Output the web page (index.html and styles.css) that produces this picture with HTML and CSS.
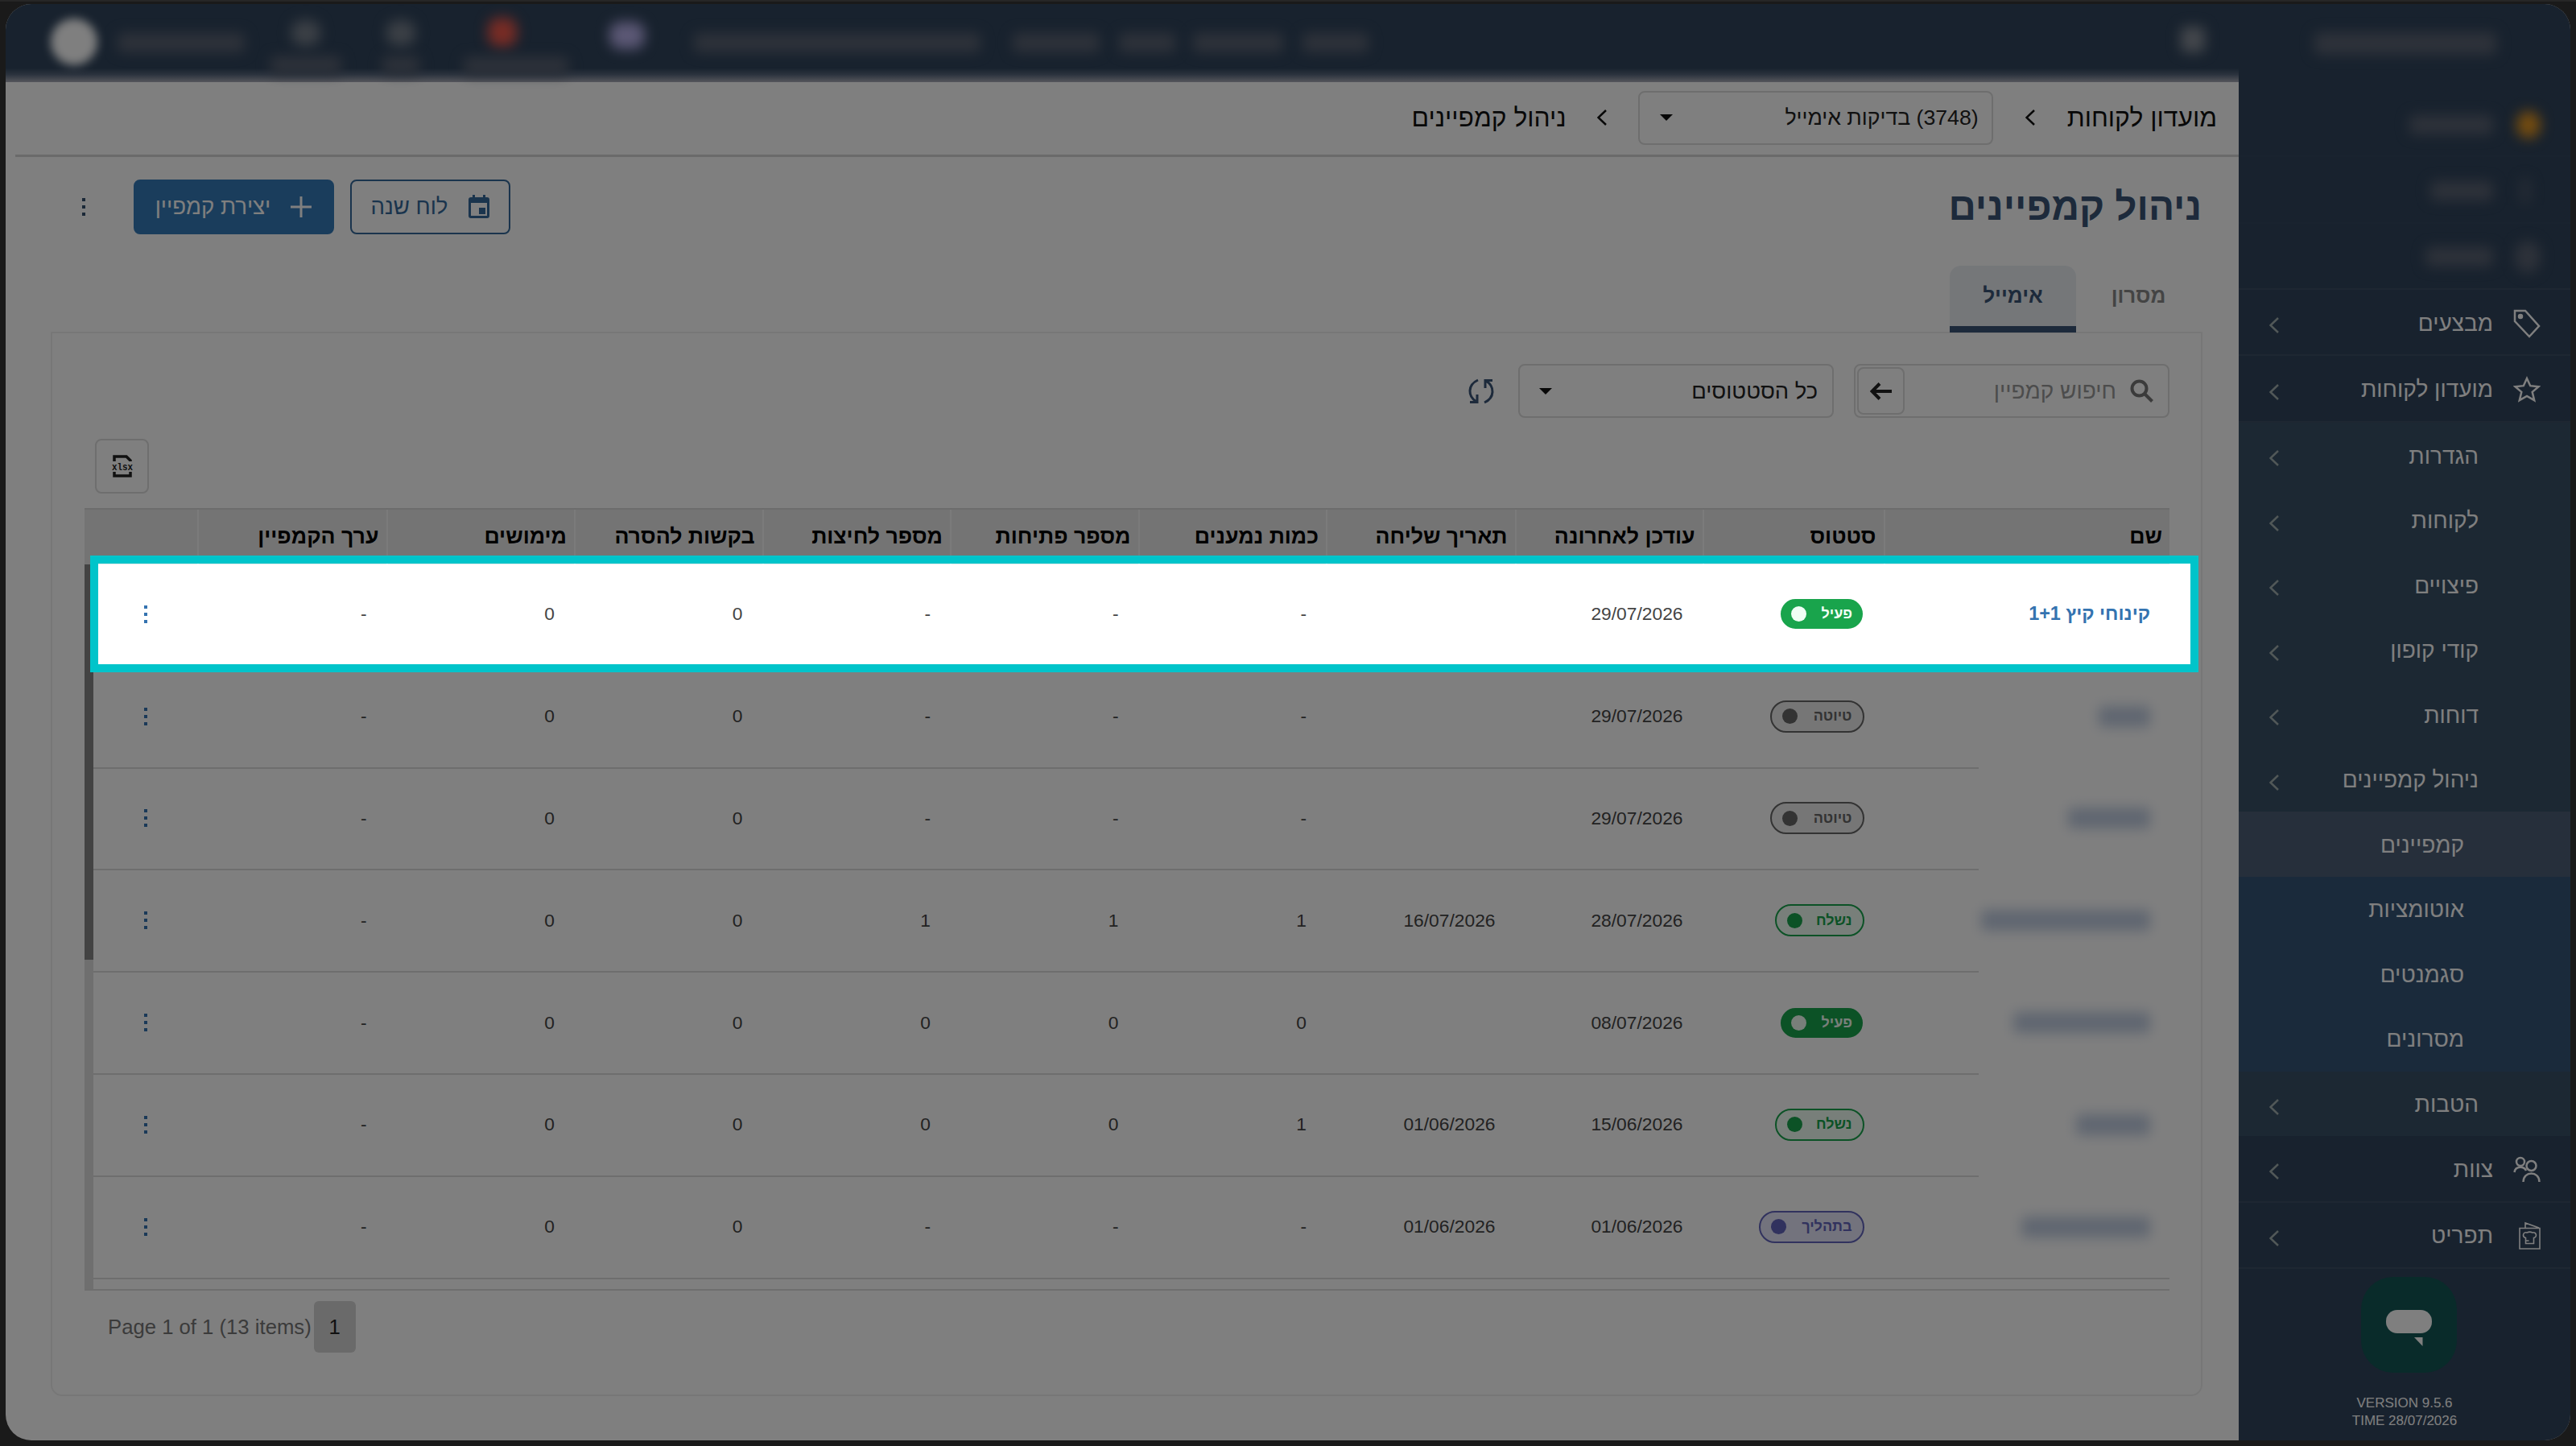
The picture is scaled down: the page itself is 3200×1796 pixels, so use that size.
FILE: index.html
```
<!DOCTYPE html>
<html lang="he" dir="rtl">
<head>
  <meta charset="UTF-8" />
  <meta name="viewport" content="width=device-width, initial-scale=1.0"/>
  <link rel="stylesheet" href="styles.css">
  <title>ניהול קמפיינים</title>
</head>
<body>
  <div class="window">

    <!-- Sidebar -->
    <aside class="sidebar">
      <div class="brand"><span class="smudge w-brand"></span></div>
      <div class="nav-item"><span class="nav-icon"><i class="smudge bell"></i></span><span class="smudge w-90"></span></div>
      <div class="nav-item"><span class="nav-icon"><i class="smudge thin"></i></span><span class="smudge w-75"></span></div>
      <div class="nav-item"><span class="nav-icon"><i class="smudge round"></i></span><span class="smudge w-80"></span></div>
      <div class="nav-item">
        <span class="nav-icon"><svg width="34" height="36" viewBox="0 0 34 36"><path d="M2 2h13l17 19-12 13L2 15z"/><circle class="fill" cx="9" cy="9" r="2"/></svg></span>
        <span class="label">מבצעים</span><svg class="chev" viewBox="0 0 12 20"><path d="M11 1 1.500 10 11 19"/></svg>
      </div>
      <div class="nav-item">
        <span class="nav-icon"><svg width="34" height="34" viewBox="0 0 34 34"><path d="M17 3l4.200 9.200 10.300 1-7.800 6.700 2.500 10.300L17 25l-9.200 5.200 2.500-10.300L2.500 13.200l10.300-1z"/></svg></span>
        <span class="label">מועדון לקוחות</span><svg class="chev" viewBox="0 0 12 20"><path d="M11 1 1.500 10 11 19"/></svg>
      </div>

      <div class="nav-sub"><span class="label">הגדרות</span><svg class="chev" viewBox="0 0 12 20"><path d="M11 1 1.500 10 11 19"/></svg></div>
      <div class="nav-sub"><span class="label">לקוחות</span><svg class="chev" viewBox="0 0 12 20"><path d="M11 1 1.500 10 11 19"/></svg></div>
      <div class="nav-sub"><span class="label">פיצויים</span><svg class="chev" viewBox="0 0 12 20"><path d="M11 1 1.500 10 11 19"/></svg></div>
      <div class="nav-sub"><span class="label">קודי קופון</span><svg class="chev" viewBox="0 0 12 20"><path d="M11 1 1.500 10 11 19"/></svg></div>
      <div class="nav-sub"><span class="label">דוחות</span><svg class="chev" viewBox="0 0 12 20"><path d="M11 1 1.500 10 11 19"/></svg></div>
      <div class="nav-sub"><span class="label">ניהול קמפיינים</span><svg class="chev" viewBox="0 0 12 20"><path d="M11 1 1.500 10 11 19"/></svg></div>
      <div class="nav-sub deep selected"><span class="label">קמפיינים</span></div>
      <div class="nav-sub deep"><span class="label">אוטומציות</span></div>
      <div class="nav-sub deep"><span class="label">סגמנטים</span></div>
      <div class="nav-sub deep"><span class="label">מסרונים</span></div>
      <div class="nav-sub"><span class="label">הטבות</span><svg class="chev" viewBox="0 0 12 20"><path d="M11 1 1.500 10 11 19"/></svg></div>

      <div class="nav-item">
        <span class="nav-icon"><svg width="34" height="34" viewBox="0 0 34 34"><circle cx="9" cy="7" r="5"/><circle cx="22.500" cy="12" r="6"/><path d="M1.500 20c1-8 12-8 14.500-2M12.500 32c0-14 20-14 20 0"/></svg></span>
        <span class="label">צוות</span><svg class="chev" viewBox="0 0 12 20"><path d="M11 1 1.500 10 11 19"/></svg>
      </div>
      <div class="nav-item">
        <span class="nav-icon"><svg class="light" width="27" height="36" viewBox="0 0 27 36"><path d="M1 8.500h25V34H1zM8 8V2l17 6M8.500 27.500h10v-7c5-1 3-8-1.500-6.500-2-1-5-1-7 0-4.500-1.500-6.500 5-1.500 6.500zM8.500 24h4"/></svg></span>
        <span class="label">תפריט</span><svg class="chev" viewBox="0 0 12 20"><path d="M11 1 1.500 10 11 19"/></svg>
      </div>

      <div class="sidebar-footer">
        <div class="chat">
          <svg width="60" height="50" viewBox="0 0 60 50"><rect x="1" y="1" width="57" height="29" rx="14"/><path d="M36 35h10.500v11z"/></svg>
        </div>
        <div class="version">VERSION 9.5.6<br>TIME 28/07/2026</div>
      </div>
    </aside>

    <main class="main">
      <header class="topbar" dir="ltr">
        <i class="smudge avatar"></i>
        <i class="smudge user"></i>
        <div class="top-icon t1"><i class="smudge dot"></i><i class="smudge cap"></i></div>
        <div class="top-icon t2"><i class="smudge dot"></i><i class="smudge cap"></i></div>
        <div class="top-icon t3"><i class="smudge dot red"></i><i class="smudge cap"></i></div>
        <i class="smudge flag"></i>
        <i class="smudge site"></i>
        <i class="smudge word w1"></i><i class="smudge word w2"></i><i class="smudge word w3"></i><i class="smudge word w4"></i>
        <i class="smudge burger"></i>
      </header>

      <nav class="breadcrumb">
        <span class="crumb">מועדון לקוחות</span>
        <svg class="crumb-chev" viewBox="0 0 12 20"><path d="M11 1 1.500 10 11 19"/></svg>
        <div class="select brand-select"><span>(3748) בדיקות אימייל</span><i class="caret"></i></div>
        <svg class="crumb-chev second" viewBox="0 0 12 20"><path d="M11 1 1.500 10 11 19"/></svg>
        <span class="crumb">ניהול קמפיינים</span>
      </nav>

      <div class="title-row">
        <h1>ניהול קמפיינים</h1>
        <div class="actions">
          <button class="btn btn-outline">
            <svg width="28" height="30" viewBox="0 0 28 30"><path d="M6 0h3v3h10V0h3v3h2a3 3 0 0 1 3 3v20a3 3 0 0 1-3 3H4a3 3 0 0 1-3-3V6a3 3 0 0 1 3-3h2zM4 10v16h20V10z"/><path d="M14 16h8v8h-8z"/></svg>
            <span>לוח שנה</span>
          </button>
          <button class="btn btn-primary">
            <svg width="28" height="28" viewBox="0 0 28 28"><path d="M12.500 1h3v11.500H27v3H15.500V27h-3V15.500H1v-3h11.500z"/></svg>
            <span>יצירת קמפיין</span>
          </button>
          <i class="dots dark"></i>
        </div>
      </div>

      <div class="tabs">
        <div class="tab">מסרון</div>
        <div class="tab active">אימייל</div>
      </div>

      <section class="panel">
        <div class="filters">
          <div class="search">
            <svg width="30" height="30" viewBox="0 0 30 30"><circle cx="11.500" cy="11.500" r="9"/><path d="M18 18l9.500 9.500"/></svg>
            <span>חיפוש קמפיין</span>
            <b class="go"><svg width="28" height="24" viewBox="0 0 28 24"><path d="M27 12H3M12 2.500 2.500 12l9.500 9.500"/></svg></b>
          </div>
          <div class="select status-select"><span>כל הסטטוסים</span><i class="caret"></i></div>
          <svg class="refresh" width="32" height="32" viewBox="0 0 32 32"><path d="M12 2C-1 8-1 22 10 29M2 29.500h9V20M20 30c13-6 13-20 2-27M30 2.500h-9V12"/></svg>
        </div>

        <div class="export-row">
          <div class="export">
            <svg width="28" height="28" viewBox="0 0 28 28"><path d="M4 8V2h15l5 5v1M4 21v5h20v-5"/><text x="14" y="19" textLength="26" lengthAdjust="spacingAndGlyphs">xlsx</text></svg>
          </div>
        </div>

        <div class="grid">
          <div class="row head">
            <div>שם</div><div>סטטוס</div><div>עודכן לאחרונה</div><div>תאריך שליחה</div><div>כמות נמענים</div><div>מספר פתיחות</div><div>מספר לחיצות</div><div>בקשות להסרה</div><div>מימושים</div><div>ערך הקמפיין</div><div></div>
          </div>
          <div class="grid-body">
            <div class="rows">
              <div class="row">
                <div class="name">קינוחי קיץ 1+1</div><div><span class="badge active">פעיל</span></div><div>29/07/2026</div><div></div><div>-</div><div>-</div><div>-</div><div>0</div><div>0</div><div>-</div><div><i class="dots"></i></div>
              </div>
              <div class="row">
                <div class="name"><i class="smudge n1"></i></div><div><span class="badge draft">טיוטה</span></div><div>29/07/2026</div><div></div><div>-</div><div>-</div><div>-</div><div>0</div><div>0</div><div>-</div><div><i class="dots"></i></div>
              </div>
              <div class="row">
                <div class="name"><i class="smudge n2"></i></div><div><span class="badge draft">טיוטה</span></div><div>29/07/2026</div><div></div><div>-</div><div>-</div><div>-</div><div>0</div><div>0</div><div>-</div><div><i class="dots"></i></div>
              </div>
              <div class="row">
                <div class="name"><i class="smudge n3"></i></div><div><span class="badge sent">נשלח</span></div><div>28/07/2026</div><div>16/07/2026</div><div>1</div><div>1</div><div>1</div><div>0</div><div>0</div><div>-</div><div><i class="dots"></i></div>
              </div>
              <div class="row">
                <div class="name"><i class="smudge n4"></i></div><div><span class="badge active">פעיל</span></div><div>08/07/2026</div><div></div><div>0</div><div>0</div><div>0</div><div>0</div><div>0</div><div>-</div><div><i class="dots"></i></div>
              </div>
              <div class="row">
                <div class="name"><i class="smudge n5"></i></div><div><span class="badge sent">נשלח</span></div><div>15/06/2026</div><div>01/06/2026</div><div>1</div><div>0</div><div>0</div><div>0</div><div>0</div><div>-</div><div><i class="dots"></i></div>
              </div>
              <div class="row last">
                <div class="name"><i class="smudge n6"></i></div><div><span class="badge progress">בתהליך</span></div><div>01/06/2026</div><div>01/06/2026</div><div>-</div><div>-</div><div>-</div><div>0</div><div>0</div><div>-</div><div><i class="dots"></i></div>
              </div>
            </div>
            <div class="scrollbar"><div class="thumb"></div></div>
          </div>
        </div>

        <div class="pager" dir="ltr">
          <span>Page 1 of 1 (13 items)</span><b>1</b>
        </div>
      </section>
    </main>
  </div>

  <!-- Dims everything except the first campaign -->
  <div class="spotlight"></div>
</body>
</html>
```
FILE: styles.css
```
* {
  box-sizing: border-box;
}

:root {
  --navy: #30445c;
  --blue: #3473b0;
  --line: #dcdcdc;
  --accent: #00c4ca;
}

html, body {
  margin: 0;
  padding: 0;
  height: 100%;
  overflow: hidden;
}

body {
  background: #343434;
  border-top: 2px solid #4c4c4c;
  padding: 3px 7px 0;
  font-family: 'Liberation Sans', Arial, sans-serif;
  color: #444;
}

.window {
  display: flex;
  width: 3186px;
  height: 1784px;
  border-radius: 32px;
  overflow: hidden;
  background: #fff;
}

svg {
  display: block;
  flex: none;
  fill: none;
  stroke: currentColor;
}

/* blurred private details */
.smudge {
  display: block;
  flex: none;
  height: 24px;
  border-radius: 6px;
  background: #5c6474;
  filter: blur(8px);
}

/* ---------- sidebar ---------- */
.sidebar {
  width: 412px;
  flex: none;
  background: var(--navy);
  color: #fff;
  display: flex;
  flex-direction: column;
}

.brand {
  height: 108px;
  padding: 35px 92px 0 0;
}

.w-brand { width: 226px; height: 28px; }
.w-90 { width: 104px; }
.w-75 { width: 78px; }
.w-80 { width: 84px; }

.nav-item {
  height: 82.350px;
  flex: none;
  border-bottom: 2px solid #3c4f64;
  display: flex;
  align-items: center;
  padding: 3px 37px 0 0;
  font-size: 28px;
}

.nav-item:nth-child(2),
.nav-item:nth-child(3) {
  border-bottom-color: #32465e;
}

.nav-icon {
  width: 59px;
  flex: none;
}

.nav-icon svg {
  stroke-width: 2.500;
}

.nav-icon svg.light {
  stroke-width: 1.600;
}

.nav-icon .fill {
  fill: #fff;
}

.bell { width: 30px; height: 34px; border-radius: 50%; background: #e9981f; }
.thin { width: 14px; height: 34px; margin-right: 12px; opacity: .6; }
.round { width: 32px; height: 40px; border-radius: 50%; }

.chev {
  width: 12px;
  height: 20px;
  margin: 5px auto 0 38px;
  stroke: #a3b0b0;
  stroke-width: 2.500;
}

.nav-sub {
  height: 80.600px;
  flex: none;
  background: #385066;
  display: flex;
  align-items: center;
  padding: 3px 114px 0 0;
  font-size: 28px;
}

.nav-sub.deep {
  background: #345476;
  padding-top: 2px;
  padding-right: 132px;
}

.nav-sub.deep.selected {
  background: #4c5e76;
}

.sidebar-footer {
  padding-top: 10px;
}

.chat {
  width: 119px;
  height: 119px;
  margin-right: 141px;
  border-radius: 40px;
  background: #125654;
  display: flex;
  align-items: center;
  justify-content: center;
  padding-top: 11px;
}

.chat svg {
  fill: #fff;
  stroke: none;
}

.version {
  direction: ltr;
  text-align: center;
  margin-top: 27px;
  font-size: 17px;
  line-height: 22.500px;
}

/* ---------- top bar ---------- */
.main {
  flex: 1;
  min-width: 0;
}

.topbar {
  height: 97px;
  display: flex;
  background: linear-gradient(var(--navy) 82%, #55647a 90%, #aaacb8);
}

.topbar .smudge { margin-top: 36px; }
.topbar .avatar { width: 58px; height: 58px; margin: 18px 0 0 56px; border-radius: 50%; background: #fff; filter: blur(6px); }
.topbar .user { width: 158px; margin-left: 25px; }
.topbar .site { width: 356px; margin-left: 61px; }
.topbar .w1 { width: 108px; margin-left: 40px; }
.topbar .w2 { width: 70px; margin-left: 24px; }
.topbar .w3 { width: 112px; margin-left: 22px; }
.topbar .w4 { width: 82px; margin-left: 24px; }
.topbar .burger { width: 30px; height: 32px; margin: 28px 0 0 1009px; background: #888e98; }
.topbar .flag { width: 44px; height: 34px; margin: 22px 0 0 51px; border-radius: 14px; background: #b7b0ea; }

.top-icon {
  display: flex;
  flex-direction: column;
  align-items: center;
}

.topbar .top-icon .smudge { margin-top: 20px; }
.topbar .top-icon .cap { margin-top: 13px; height: 22px; width: 100%; }
.topbar .top-icon .dot { width: 36px; height: 32px; border-radius: 14px; background: #77808c; }
.topbar .top-icon .dot.red { background: #f0584a; margin: 17px 34px 0 0; height: 36px; }
.t1 { width: 88px; margin-left: 32px; }
.t2 { width: 46px; margin-left: 51px; }
.t3 { width: 130px; margin-left: 55px; }

/* ---------- breadcrumb ---------- */
.breadcrumb {
  height: 93px;
  margin-left: 12px;
  padding: 0 27px 2px 0;
  display: flex;
  align-items: center;
  border-bottom: 3px solid #d4d4d4;
  color: #111;
  font-size: 31.800px;
}

.crumb-chev {
  width: 12px;
  height: 20px;
  margin: 0 40px;
  stroke-width: 2.500;
}

.crumb-chev.second {
  margin: 0 39px 0 38px;
}

.select {
  height: 67px;
  border: 2px solid var(--line);
  border-radius: 8px;
  display: flex;
  align-items: center;
  justify-content: space-between;
  color: #222;
  font-size: 27.300px;
}

.brand-select {
  width: 441px;
  padding: 0 16px 0 25px;
  font-size: 26.700px;
}

.caret {
  border: 8px solid transparent;
  border-top-color: #111;
  border-bottom: 0;
}

/* ---------- title ---------- */
.title-row {
  height: 135px;
  padding: 28px 46px 0 95px;
  display: flex;
  justify-content: space-between;
}

h1 {
  margin: 8px 0 0;
  font-size: 47.600px;
  line-height: 52px;
  color: #3a5576;
}

.actions {
  display: flex;
  align-items: flex-start;
}

.btn {
  height: 68px;
  border-radius: 8px;
  border: 2px solid #34699a;
  padding: 0;
  display: flex;
  align-items: center;
  justify-content: center;
  gap: 24px;
  font-family: inherit;
  font-size: 27.600px;
  color: #34699a;
}

.btn svg {
  fill: currentColor;
  fill-rule: evenodd;
  stroke: none;
}

.btn-outline {
  width: 199px;
  background: none;
}

.btn-primary {
  width: 249px;
  margin-right: 20px;
  background: #347ab8;
  border-color: #347ab8;
  color: #fff;
}

.dots {
  display: block;
  width: 4px;
  height: 4px;
  background: var(--blue);
  box-shadow: 0 -9px var(--blue), 0 9px var(--blue);
}

.dots.dark {
  margin: 32px 60px 0 0;
  background: #34506e;
  box-shadow: 0 -9px #34506e, 0 9px #34506e;
}

/* ---------- tabs ---------- */
.tabs {
  display: flex;
  padding-right: 47px;
  height: 82px;
}

.tab {
  height: 83px;
  width: 155px;
  padding-top: 22px;
  text-align: center;
  font-weight: bold;
  font-size: 26px;
  line-height: 30px;
  color: #888;
}

.tab.active {
  position: relative;
  width: 157px;
  background: #ebeef3;
  border-bottom: 8px solid #3a5576;
  border-radius: 14px 14px 0 0;
  color: #3a5576;
}

/* ---------- panel ---------- */
.panel {
  margin: 0 45px 0 56px;
  height: 1322px;
  border: 2px solid #eee;
  border-radius: 0 0 14px 14px;
  padding: 38px 39px 0 40px;
}

.filters {
  height: 67px;
  display: flex;
  align-items: center;
}

.search {
  width: 392px;
  height: 67px;
  border: 2px solid var(--line);
  border-radius: 8px;
  display: flex;
  align-items: center;
  padding: 0 17px 0 2px;
  font-size: 28px;
  color: #999;
}

.search > svg {
  stroke: #777;
  stroke-width: 4;
  margin-left: 17px;
}

.go {
  width: 59px;
  height: 59px;
  margin-right: auto;
  border: 2px solid var(--line);
  border-radius: 8px;
  display: flex;
  align-items: center;
  justify-content: center;
  color: #222;
}

.go svg {
  stroke-width: 4;
}

.status-select {
  width: 392px;
  margin-right: 25px;
  padding: 0 18px 0 24px;
}

.refresh {
  margin-right: 30px;
  stroke: #3a5576;
  stroke-width: 3;
}

.export-row {
  height: 112px;
  padding-top: 26px;
  display: flex;
  justify-content: flex-end;
}

.export {
  width: 67px;
  height: 68px;
  margin-left: 13px;
  border: 2px solid var(--line);
  border-radius: 8px;
  display: flex;
  align-items: center;
  justify-content: center;
  color: #222;
}

.export svg {
  overflow: visible;
  stroke-width: 3.500;
}

.export text {
  font: bold 13px 'Liberation Mono', monospace;
  text-anchor: middle;
  direction: ltr;
  fill: #222;
  stroke: none;
}

/* ---------- table ---------- */
.row {
  display: grid;
  grid-template-columns: 355.500px 225px 233px 234.500px repeat(5, 233.500px) 234.500px 1fr;
  align-items: center;
  height: 126.800px;
  padding-bottom: 3px;
  font-size: 22.800px;
  background: linear-gradient(to left, transparent 237px, var(--line) 237px) bottom / 100% 2px no-repeat;
}

.row > div {
  padding-right: 24px;
}

.row.last {
  background: linear-gradient(var(--line), var(--line)) bottom / 100% 2px no-repeat;
}

.row > div:last-child {
  padding: 0;
  display: flex;
  justify-content: center;
}

.row.head {
  height: 70px;
  padding: 0;
  align-items: stretch;
  background: #e9e9e9;
  border-top: 2px solid #d8d8d8;
  color: #000;
  font-weight: bold;
  font-size: 26.700px;
}

.row.head > div {
  padding: 18px 9px 0 0;
  line-height: 30px;
  border-left: 2px solid #f6f6f6;
}

.row.head > div:last-child {
  border-left: 0;
}

.row .name {
  font-weight: bold;
  font-size: 23.400px;
  color: var(--blue);
}

.name .smudge {
  background: #bfcce1;
  height: 26px;
}

.n1 { width: 64px; }
.n2 { width: 102px; }
.n3 { width: 210px; }
.n4 { width: 170px; }
.n5 { width: 92px; }
.n6 { width: 160px; }

.badge {
  display: inline-flex;
  align-items: center;
  justify-content: space-between;
  height: 40px;
  border: 2px solid;
  border-radius: 20px;
  padding: 0 13px;
  font-weight: bold;
  font-size: 18px;
  vertical-align: middle;
}

.badge::after {
  content: '';
  width: 19px;
  height: 19px;
  border-radius: 50%;
  background: currentColor;
}

.badge.active {
  width: 102px;
  height: 37px;
  margin-right: 1.500px;
  padding: 0 11px;
  border-color: #19a44c;
  background: #19a44c;
  color: #f0fff5;
}

.badge.draft {
  width: 117px;
  background: #ececec;
  color: #666;
}

.badge.sent {
  width: 111px;
  background: #f0fff5;
  color: #19a44c;
}

.badge.progress {
  width: 131px;
  background: #e6e6fb;
  color: #6264bc;
}

.grid-body {
  display: flex;
  height: 902px;
  overflow: hidden;
  border-bottom: 2px solid var(--line);
}

.rows {
  flex: 1;
}

.scrollbar {
  width: 11px;
  background: #dedede;
}

.thumb {
  height: 491px;
  background: #868686;
}

/* ---------- pager ---------- */
.pager {
  display: flex;
  align-items: center;
  padding: 13px 0 0 29px;
  font-size: 25.700px;
  color: #777;
}

.pager b {
  width: 52px;
  height: 64px;
  margin-left: 3px;
  border-radius: 6px;
  background: #d4d4d4;
  display: flex;
  align-items: center;
  justify-content: center;
  font-weight: normal;
  color: #222;
}

.spotlight {
  position: absolute;
  left: 112px;
  top: 690px;
  width: 2619px;
  height: 145px;
  border: 10px solid var(--accent);
  box-shadow: 0 0 0 4000px rgba(0, 0, 0, .5);
}
```
